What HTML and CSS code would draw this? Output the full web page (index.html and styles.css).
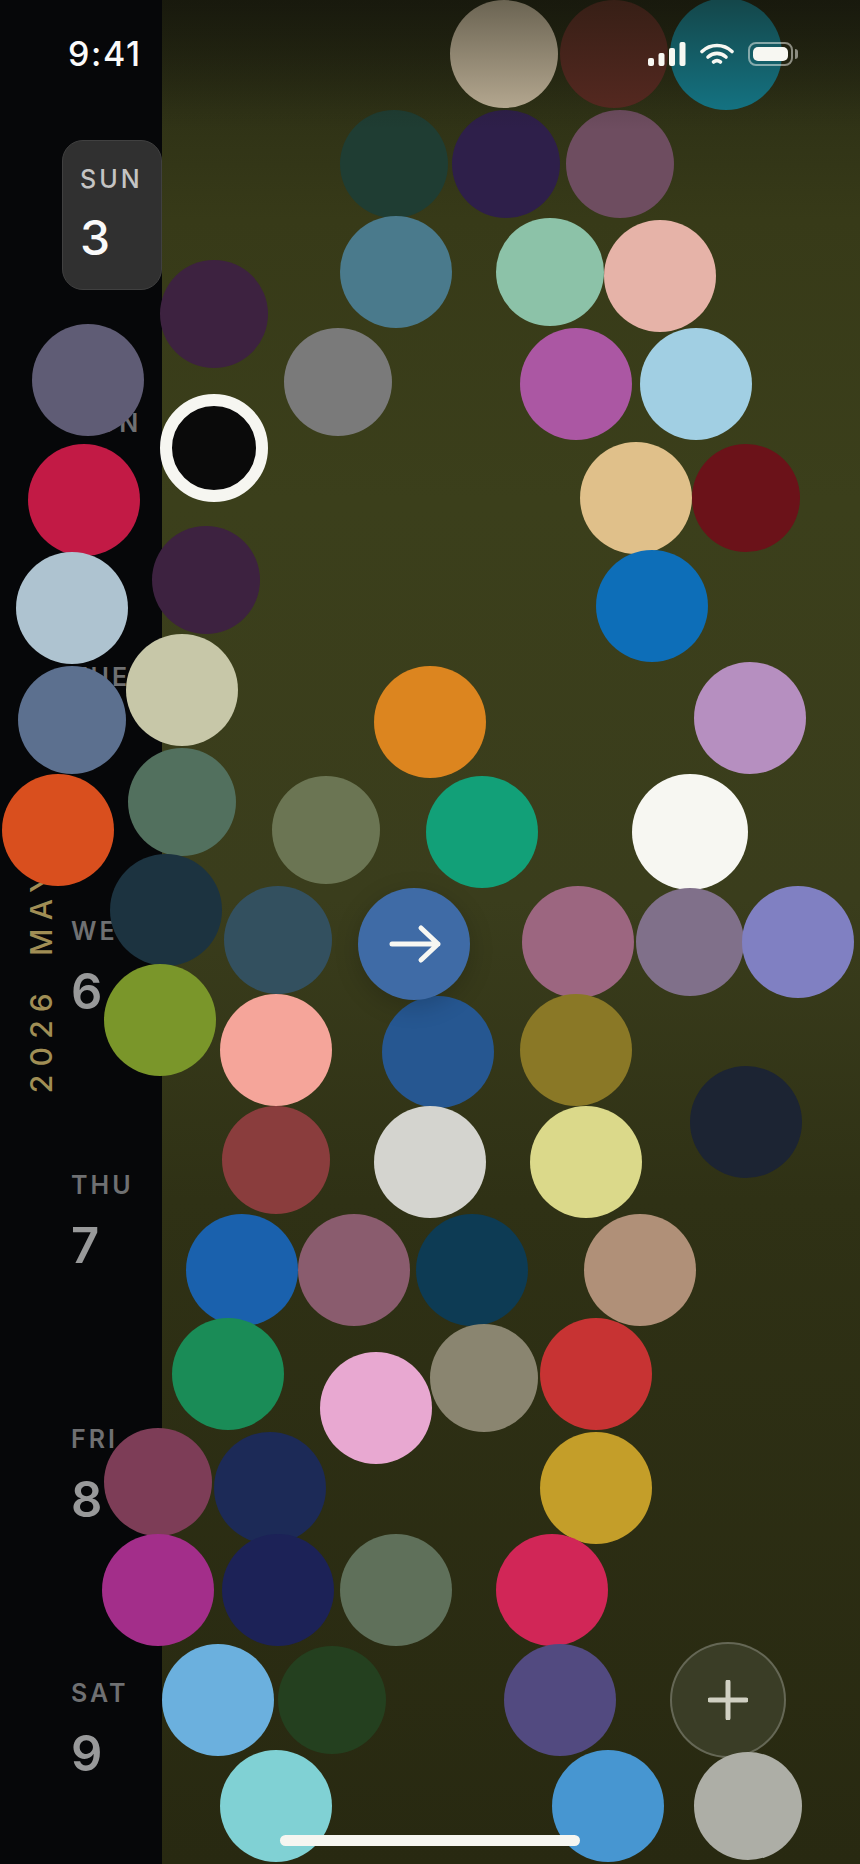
FILE: index.html
```html
<!DOCTYPE html>
<html lang="en">
<head>
<meta charset="utf-8">
<title>Calendar</title>
<link rel="stylesheet" href="styles.css">
</head>
<body>
<div class="screen">
  <aside class="rail">
    <div class="month-col"><span class="month">2026 MAY</span></div>
    <div class="days">
      <div class="day day-active"><span class="day-name">SUN</span><span class="day-num">3</span></div>
      <div class="day"><span class="day-name">MON</span><span class="day-num">4</span></div>
      <div class="day"><span class="day-name">TUE</span><span class="day-num">5</span></div>
      <div class="day"><span class="day-name">WED</span><span class="day-num">6</span></div>
      <div class="day"><span class="day-name">THU</span><span class="day-num">7</span></div>
      <div class="day"><span class="day-name">FRI</span><span class="day-num">8</span></div>
      <div class="day"><span class="day-name">SAT</span><span class="day-num">9</span></div>
    </div>
  </aside>
  <main class="field"></main>

  <div class="canvas">
    <i class="dot s" style="--x:504;--y:54;--c:#c2b49b"></i>
    <i class="dot s" style="--x:614;--y:54;--c:#5a2a22"></i>
    <i class="dot" style="--x:726;--y:54;--c:#147a8b"></i>
    <i class="dot s" style="--x:394;--y:164;--c:#1f3d33"></i>
    <i class="dot s" style="--x:506;--y:164;--c:#2e1f4a"></i>
    <i class="dot s" style="--x:620;--y:164;--c:#6e4d60"></i>
    <i class="dot" style="--x:396;--y:272;--c:#4a7a8c"></i>
    <i class="dot s" style="--x:550;--y:272;--c:#8cc2a8"></i>
    <i class="dot" style="--x:660;--y:276;--c:#e6b3a8"></i>
    <i class="dot s" style="--x:214;--y:314;--c:#3d2240"></i>
    <i class="dot s" style="--x:338;--y:382;--c:#7a7a7a"></i>
    <i class="dot" style="--x:88;--y:380;--c:#5f5c75"></i>
    <i class="dot" style="--x:576;--y:384;--c:#ab57a3"></i>
    <i class="dot" style="--x:696;--y:384;--c:#a1cfe3"></i>
    <i class="dot s ring" style="--x:214;--y:448;--c:#0a0a0a"></i>
    <i class="dot" style="--x:84;--y:500;--c:#c21a45"></i>
    <i class="dot" style="--x:636;--y:498;--c:#e0c08a"></i>
    <i class="dot s" style="--x:746;--y:498;--c:#6b1219"></i>
    <i class="dot s" style="--x:206;--y:580;--c:#3d2240"></i>
    <i class="dot" style="--x:72;--y:608;--c:#aec3d0"></i>
    <i class="dot" style="--x:652;--y:606;--c:#0d6eb8"></i>
    <i class="dot s" style="--x:72;--y:720;--c:#5c708f"></i>
    <i class="dot" style="--x:182;--y:690;--c:#c7c7a8"></i>
    <i class="dot" style="--x:430;--y:722;--c:#dc851f"></i>
    <i class="dot" style="--x:750;--y:718;--c:#b68fc0"></i>
    <i class="dot" style="--x:58;--y:830;--c:#d94f1e"></i>
    <i class="dot s" style="--x:182;--y:802;--c:#52705e"></i>
    <i class="dot s" style="--x:326;--y:830;--c:#6b7553"></i>
    <i class="dot" style="--x:482;--y:832;--c:#12a078"></i>
    <i class="dot l" style="--x:690;--y:832;--c:#f7f7f2"></i>
    <i class="dot" style="--x:166;--y:910;--c:#1c3340"></i>
    <i class="dot s" style="--x:278;--y:940;--c:#33505f"></i>
    <i class="dot" style="--x:578;--y:942;--c:#9c6680"></i>
    <i class="dot s" style="--x:690;--y:942;--c:#80708a"></i>
    <i class="dot" style="--x:798;--y:942;--c:#8080c2"></i>
    <i class="dot" style="--x:160;--y:1020;--c:#7a962a"></i>
    <i class="dot" style="--x:276;--y:1050;--c:#f5a59a"></i>
    <i class="dot" style="--x:438;--y:1052;--c:#265791"></i>
    <i class="dot" style="--x:576;--y:1050;--c:#8a7826"></i>
    <div class="dot action" style="--x:414;--y:944;--c:#3f6ba6">
      <svg class="action-icon" viewBox="0 0 60 60" width="60" height="60" aria-hidden="true"><path d="M8 30H54M37 14L54 30L37 46"/></svg>
    </div>
    <i class="dot" style="--x:746;--y:1122;--c:#1c2433"></i>
    <i class="dot s" style="--x:276;--y:1160;--c:#8a3d3d"></i>
    <i class="dot" style="--x:430;--y:1162;--c:#d4d4cf"></i>
    <i class="dot" style="--x:586;--y:1162;--c:#dbd98a"></i>
    <i class="dot" style="--x:242;--y:1270;--c:#1a61ad"></i>
    <i class="dot" style="--x:354;--y:1270;--c:#8a5c6e"></i>
    <i class="dot" style="--x:472;--y:1270;--c:#0d3b54"></i>
    <i class="dot" style="--x:640;--y:1270;--c:#b09078"></i>
    <i class="dot" style="--x:228;--y:1374;--c:#1a8c57"></i>
    <i class="dot" style="--x:376;--y:1408;--c:#e8a8d1"></i>
    <i class="dot s" style="--x:484;--y:1378;--c:#8a8570"></i>
    <i class="dot" style="--x:596;--y:1374;--c:#c73333"></i>
    <i class="dot s" style="--x:158;--y:1482;--c:#7d3d57"></i>
    <i class="dot" style="--x:270;--y:1488;--c:#1c2a57"></i>
    <i class="dot" style="--x:596;--y:1488;--c:#c49e29"></i>
    <i class="dot" style="--x:158;--y:1590;--c:#a32e8a"></i>
    <i class="dot" style="--x:278;--y:1590;--c:#1c2257"></i>
    <i class="dot" style="--x:396;--y:1590;--c:#5f705a"></i>
    <i class="dot" style="--x:552;--y:1590;--c:#d12657"></i>
    <i class="dot" style="--x:218;--y:1700;--c:#6bb0de"></i>
    <i class="dot s" style="--x:332;--y:1700;--c:#24401f"></i>
    <i class="dot" style="--x:560;--y:1700;--c:#524a80"></i>
    <i class="dot" style="--x:276;--y:1806;--c:#80d1d4"></i>
    <i class="dot" style="--x:608;--y:1806;--c:#4796d1"></i>
    <div class="dot l add" style="--x:728;--y:1700;--c:#3a3d26">
      <svg class="add-icon" viewBox="0 0 40 40" width="40" height="40" aria-hidden="true"><path d="M20 2V38M2 20H38"/></svg>
    </div>
    <i class="dot s" style="--x:748;--y:1806;--c:#adaea6"></i>
  </div>

  <div class="top-fade"></div>

  <header class="status">
    <span class="time">9:41</span>
    <div class="status-icons">
      <svg class="signal" viewBox="0 0 38 24" width="38" height="24" aria-hidden="true">
        <rect x="0" y="16" width="6" height="8" rx="2"/>
        <rect x="10.5" y="11" width="6" height="13" rx="2"/>
        <rect x="21" y="6" width="6" height="18" rx="2"/>
        <rect x="31.5" y="0" width="6" height="24" rx="2"/>
      </svg>
      <svg class="wifi" viewBox="0 0 34 22" width="34" height="22" aria-hidden="true">
        <path d="M2 8.5C10.500 0.500 23.500 0.500 32 8.500"/>
        <path d="M8 14C13.500 9.200 20.500 9.200 26 14"/>
        <path d="M13.500 19C15.800 17.200 18.200 17.200 20.500 19"/>
      </svg>
      <div class="battery"><div class="battery-fill"></div></div>
    </div>
  </header>

  <div class="home-bar"></div>
</div>
</body>
</html>
```
FILE: styles.css
```css
* { box-sizing: border-box; }
html, body { margin: 0; padding: 0; }
body { background: #060709; font-family: Inter, "Liberation Sans", sans-serif; }

.screen {
  position: relative;
  display: flex;
  width: 860px;
  height: 1864px;
  overflow: hidden;
}

/* left rail */
.rail {
  display: flex;
  width: 162px;
  flex: none;
  background: #060709;
}
.month-col {
  width: 62px;
  flex: none;
  padding: 864px 0 0 27px;
}
.month {
  display: block;
  writing-mode: vertical-rl;
  transform: rotate(180deg);
  font-size: 30px;
  font-weight: 500;
  letter-spacing: 8.200px;
  word-spacing: 13px;
  line-height: 29px;
  color: #a08e55;
  white-space: nowrap;
}
.days {
  flex: 1;
  padding-top: 140px;
  min-width: 0;
}
.day {
  display: flex;
  flex-direction: column;
  height: 254px;
  padding-left: 9px;
}
.day-name {
  font-size: 25px;
  line-height: 30px;
  font-weight: 600;
  letter-spacing: 3px;
  color: #6f7072;
}
.day-num {
  margin-top: 18px;
  font-size: 49px;
  line-height: 56px;
  font-weight: 600;
  color: #98999a;
}
.day-active {
  height: 150px;
  margin-bottom: 118px;
  padding: 23px 0 0 17px;
  background: #303030;
  border: 1.500px solid #404040;
  border-radius: 21px;
}
.day-active .day-name { color: #c4c4c4; font-weight: 500; }
.day-active .day-num { color: #fafafa; margin-top: 16px; font-size: 48px; font-weight: 500; }

/* field */
.field {
  flex: 1;
  background: linear-gradient(180deg, #1d1f10 0, #2f3216 110px, #373a18 220px, #3b3f1b 500px, #3a3d1c 900px, #2f3115 1200px, #282911 1864px);
}

/* free canvas of circles */
.canvas {
  position: absolute;
  inset: 0;
}
.dot {
  position: absolute;
  display: flex;
  align-items: center;
  justify-content: center;
  left: calc(var(--x) * 1px);
  top: calc(var(--y) * 1px);
  width: 112px;
  height: 112px;
  border-radius: 50%;
  background: var(--c);
  transform: translate(-50%, -50%);
}
.dot.s { width: 108px; height: 108px; }
.dot.l { width: 116px; height: 116px; }
.ring { border: 12px solid #f6f6f1; }
.action { box-shadow: 0 6px 24px rgba(0, 0, 0, .18); }
.action-icon { fill: none; stroke: #f7f7f2; stroke-width: 5; stroke-linecap: round; stroke-linejoin: round; }
.add { border: 2px solid rgba(255, 255, 255, .22); }
.add-icon { fill: none; stroke: #d0d0c2; stroke-width: 5; stroke-linecap: round; }

/* top fade over the circles */
.top-fade {
  position: absolute;
  left: 162px;
  right: 0;
  top: 0;
  height: 130px;
  background: linear-gradient(180deg, rgba(20, 20, 10, .5), rgba(20, 20, 10, 0));
}

/* status bar */
.status {
  position: absolute;
  left: 0;
  right: 0;
  top: 0;
  height: 90px;
  display: flex;
  align-items: flex-start;
  justify-content: space-between;
  padding: 35px 67px 0 68px;
  color: #fafafa;
}
.time {
  font-size: 34px;
  line-height: 38px;
  font-weight: 500;
  letter-spacing: 1.600px;
}
.status-icons {
  display: flex;
  align-items: center;
  gap: 14px;
  padding-top: 7px;
}
.signal { fill: #f7f7f2; }
.wifi { fill: none; stroke: #f7f7f2; stroke-width: 3.600; stroke-linecap: round; }
.battery {
  position: relative;
  width: 45px;
  height: 24px;
  padding: 3px;
  border: 2px solid rgba(247, 247, 242, .5);
  border-radius: 8px;
}
.battery::after {
  content: "";
  position: absolute;
  right: -7px;
  top: 5px;
  width: 3px;
  height: 10px;
  border-radius: 0 3px 3px 0;
  background: rgba(247, 247, 242, .5);
}
.battery-fill {
  height: 100%;
  background: #f7f7f2;
  border-radius: 5px;
}

/* home indicator */
.home-bar {
  position: absolute;
  left: 280px;
  top: 1835px;
  width: 300px;
  height: 11px;
  border-radius: 6px;
  background: #f6f6f1;
}
```
